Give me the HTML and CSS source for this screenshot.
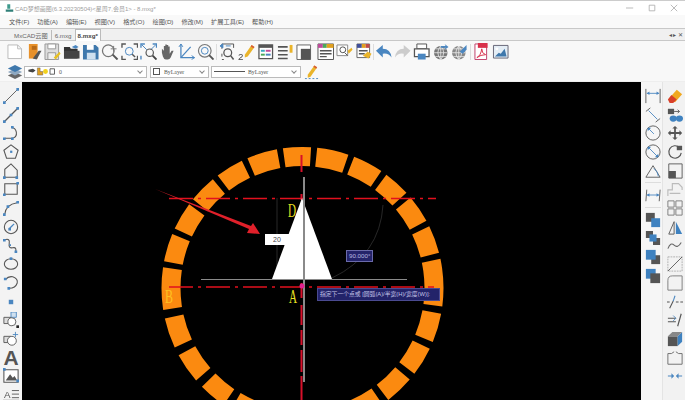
FILE: index.html
```html
<!DOCTYPE html>
<html lang="zh">
<head>
    <meta charset="UTF-8">
    <title>CAD梦想画图</title>
    <link rel="stylesheet" href="styles.css">
</head>
<body>

<div class="title-bar">
    <svg class="app-icon" viewBox="0 0 12 12"><path d="M3 1h4v6H3z" fill="#3f9a8c"/><path d="M1 8h10v3H1z" fill="#2f7f78"/></svg>
    <span class="title-text">CAD梦想画图(6.3.20230504)&lt;星周7,会员1&gt; - 8.mxg*</span>
    <div class="win-btns">
        <svg viewBox="0 0 10 10"><path d="M0 5h9" stroke="#aaa"/></svg>
        <svg viewBox="0 0 10 10"><path d="M1.5 1.5h7v7h-7z" fill="none" stroke="#aaa"/></svg>
        <svg viewBox="0 0 10 10"><path d="M1 1l8 8M9 1l-8 8" stroke="#aaa"/></svg>
    </div>
</div>

<div class="menu-bar">
    <span>文件(F)</span><span>功能(A)</span><span>编辑(E)</span><span>视图(V)</span><span>格式(O)</span><span>绘图(D)</span><span>修改(M)</span><span>扩展工具(E)</span><span>帮助(H)</span>
</div>

<div class="tab-bar">
    <div class="tab">MxCAD云图</div>
    <div class="tab">6.mxg</div>
    <div class="tab active">8.mxg*</div>
    <div class="tab-arrows">◂ ▸ ✕</div>
</div>

<div class="tool-row">
    <!-- new / file / save / open / save as -->
    <svg class="ico" viewBox="0 0 18 18"><path d="M2 2h10l4 4v10H2z" fill="#fff" stroke="#bbb"/><path d="M12 2v4h4" fill="none" stroke="#bbb"/></svg>
    <svg class="ico" viewBox="0 0 18 18"><path d="M4 1h9v15H4z" fill="#e8912a"/><path d="M8 16l6-8h3l-5 9z" fill="#555"/><path d="M7 3h5v4H7z" fill="#b86a18"/></svg>
    <svg class="ico" viewBox="0 0 18 18"><path d="M1 1h14v16H1z" fill="#ddd" stroke="#999"/><path d="M4 1h8v5H4z" fill="#fff" stroke="#999"/><path d="M4 10h8v7H4z" fill="#eee" stroke="#999"/><path d="M10 15l6-6 1 2-5 6z" fill="#e8c020"/></svg>
    <svg class="ico" viewBox="0 0 18 18"><path d="M1 4h6l1 2h7v10H1z" fill="#333"/><path d="M1 8h16v8H1z" fill="#444"/><path d="M9 4l4-2 3 2-3 2z" fill="#4a86c0"/></svg>
    <svg class="ico" viewBox="0 0 18 18"><path d="M1 2h13l3 3v12H1z" fill="#3f78ac"/><path d="M5 2h7v5H5z" fill="#fff"/><path d="M5 10h9v7H5z" fill="#cfe0ef"/></svg>
    <!-- zoom tools -->
    <svg class="ico" viewBox="0 0 18 18"><circle cx="7.5" cy="8" r="6" fill="none" stroke="#777" stroke-width="1.3"/><path d="M12 12l5 5" stroke="#555" stroke-width="2"/><path d="M13 3v6M10 6h6" stroke="#777"/></svg>
    <svg class="ico" viewBox="0 0 18 18"><path d="M1 5V1h4M13 1h4v4M1 13v4h4M17 13v4h-4" fill="none" stroke="#555" stroke-width="1.4"/><circle cx="8.5" cy="8.5" r="4" fill="none" stroke="#4a86c0"/><path d="M11.5 11.5l3 3" stroke="#555" stroke-width="1.5"/></svg>
    <svg class="ico" viewBox="0 0 18 18"><path d="M1 5V1h4M13 1h4v4M1 17v-4" fill="none" stroke="#4a86c0" stroke-width="1.4"/><path d="M2 2l5 5M16 2l-5 5" stroke="#4a86c0"/><circle cx="10" cy="10" r="3.8" fill="none" stroke="#555" stroke-width="1.2"/><path d="M13 13l4 4" stroke="#444" stroke-width="2"/></svg>
    <svg class="ico" viewBox="0 0 18 18"><path d="M3 10V6l2 2V3h1.5v4V1.5H8V7V2h1.5v5V3.5H11V11l2-3h2l-3 7q-1 2-3 2H7q-2 0-3-3z" fill="#666"/></svg>
    <svg class="ico" viewBox="0 0 18 18"><path d="M3 1v14h14" fill="none" stroke="#4a86c0" stroke-width="1.3"/><path d="M3 15L13 4" stroke="#4a86c0" stroke-width="1.3"/><path d="M1 4l2-3 2 3M14 13l3 2-3 2" fill="none" stroke="#4a86c0"/></svg>
    <svg class="ico" viewBox="0 0 18 18"><circle cx="8" cy="8" r="6.5" fill="none" stroke="#777" stroke-width="1.2"/><circle cx="8" cy="8" r="3.5" fill="none" stroke="#4a86c0"/><path d="M12.5 12.5l4.5 4.5" stroke="#555" stroke-width="2"/></svg>
    <i class="sep"></i>
    <svg class="ico" viewBox="0 0 18 18"><path d="M3 6V1h12v4M3 17h2M3 11v3" fill="none" stroke="#555"/><path d="M1 3l3-2v4zM7 3h5" fill="#4a86c0" stroke="#4a86c0"/><circle cx="9" cy="10" r="4" fill="none" stroke="#555" stroke-width="1.3"/><path d="M12 13l3 4" stroke="#555" stroke-width="1.6"/></svg>
    <svg class="ico" viewBox="0 0 18 18"><path d="M7 12L14 2l3 2-7 10-3 1z" fill="#eab42a"/><path d="M14 2l3 2-1 1.5-3-2z" fill="#d85a3a"/><text class="ico-num" x="0" y="17">2</text></svg>
    <svg class="ico" viewBox="0 0 18 18"><path d="M2 2h14v14H2z" fill="#fff" stroke="#555" stroke-width="1.3"/><path d="M2 2h14v3H2z" fill="#555"/><path d="M4 7h4v2H4z" fill="#3aa8c0"/><path d="M9 7h5v2H9z" fill="#c04a9a"/><path d="M4 11h4v2H4z" fill="#4aa85a"/><path d="M9 11h5v2H9z" fill="#4a86c0"/></svg>
    <svg class="ico" viewBox="0 0 18 18"><path d="M2 4h10M2 8h10M2 12h10M2 16h10" stroke="#555" stroke-width="1.6"/><path d="M14 2h3v8h-3z" fill="#eab42a"/></svg>
    <svg class="ico" viewBox="0 0 18 18"><path d="M2 2h14v15H2z" fill="#fff" stroke="#666"/><path d="M6 6h10v11H6z" fill="#555"/></svg>
    <i class="gap"></i>
    <svg class="ico" viewBox="0 0 18 18"><path d="M1 1h16v16H1z" fill="#fff" stroke="#555"/><path d="M1 1h5v4H1z" fill="#c04a9a"/><path d="M6 1h4v4H6z" fill="#4aa85a"/><path d="M10 1h7v4h-7z" fill="#e0a020"/><path d="M3 8h12M3 11h12M3 14h7" stroke="#555" stroke-width="1.5"/></svg>
    <svg class="ico" viewBox="0 0 18 18"><path d="M1 2h11v11H1z" fill="#fff" stroke="#888"/><circle cx="7" cy="7" r="3" fill="none" stroke="#555"/><path d="M9 10l3 3" stroke="#555"/><path d="M12 8l4-3 1 2-4 4z" fill="#eab42a"/></svg>
    <svg class="ico" viewBox="0 0 18 18"><path d="M2 1h13v14H2z" fill="#fff" stroke="#666"/><path d="M2 1h5v4H2z" fill="#3f4f9a"/><path d="M7 1h4v4H7z" fill="#e0a020"/><path d="M11 1h4v4h-4z" fill="#c04a4a"/><path d="M4 8h9M4 11h6" stroke="#555" stroke-width="1.4"/><path d="M8 13l5-4 4 2-3 5z" fill="#eab42a"/></svg>
    <i class="sep tight"></i>
    <svg class="ico" viewBox="0 0 18 18"><path d="M1 8l7-6v4q8 0 9 9-3-5-9-4v4z" fill="#4a86c0"/></svg>
    <svg class="ico" viewBox="0 0 18 18"><path d="M17 8l-7-6v4q-8 0-9 9 3-5 9-4v4z" fill="#ccc"/></svg>
    <svg class="ico" viewBox="0 0 18 18"><path d="M4 1h10v5H4z" fill="#fff" stroke="#555"/><path d="M1.5 6h15v8h-15z" fill="#fff" stroke="#555" stroke-width="1.3"/><path d="M5 11h8v6H5z" fill="#4a86c0"/></svg>
    <svg class="ico" viewBox="0 0 18 18"><circle cx="9" cy="10" r="7" fill="#777"/><path d="M2 10h14M9 3v14M3.5 6h11M3.5 14h11M9 3q-6 7 0 14M9 3q6 7 0 14" fill="none" stroke="#eee" stroke-width=".8"/><path d="M9 3h5l-1-2 4 3-4 3 1-2H9z" fill="#4a86c0"/></svg>
    <svg class="ico" viewBox="0 0 18 18"><circle cx="8" cy="10" r="7" fill="#888"/><path d="M1 10h14M8 3v14M2.5 6h11M2.5 14h11M8 3q-6 7 0 14M8 3q6 7 0 14" fill="none" stroke="#eee" stroke-width=".8"/><path d="M9 9l7-7v5l-4 4z" fill="#4a86c0"/></svg>
    <i class="sep"></i>
    <svg class="ico" viewBox="0 0 18 18"><path d="M2 1h12v16H2z" fill="#fff" stroke="#c0406a"/><path d="M5 0h10v5H5z" fill="#d8304a"/><path d="M4 15q4-2 5-9 0 5 4 6-5 0-9 3z" fill="none" stroke="#d8304a"/></svg>
    <svg class="ico" viewBox="0 0 18 18"><path d="M1.500 2.500h15v13h-15z" fill="#e4edf5" stroke="#667"/><path d="M3 14l4-4 2 1 4-5 2 8z" fill="#3f78ac"/><circle cx="5" cy="6" r="1.500" fill="#fff"/></svg>
</div>

<div class="prop-row">
    <svg class="layer-ico" viewBox="0 0 18 18"><path d="M9 9l8 4-8 4-8-4z" fill="#666"/><path d="M9 5l8 4-8 4-8-4z" fill="#8fa8c0"/><path d="M9 1l8 4-8 4-8-4z" fill="#3f78ac"/></svg>
    <div class="combo combo-layer">
        <svg class="state-ico" viewBox="0 0 30 10"><path d="M1 3l5-1 3 2-3 2-5-1z" fill="#444"/><path d="M11 1h3v4h3v4h-6z" fill="#e0a020" stroke="#555" stroke-width=".5"/><circle cx="20" cy="5" r="2.700" fill="#f2d21e"/><path d="M25 2h5v6h-5z" fill="#fff" stroke="#555"/></svg>
        <span>0</span>
    </div>
    <div class="combo combo-color">
        <i class="swatch"></i>
        <span>ByLayer</span>
    </div>
    <div class="combo combo-line">
        <i class="line-sample"></i>
        <span>ByLayer</span>
    </div>
    <svg class="pen-ico" viewBox="0 0 16 16"><path d="M4 11L11 1l3 2-7 10-3 1z" fill="#eab42a"/><path d="M11 1l3 2-1 1.500-3-2z" fill="#d85a3a"/><path d="M1 15h2M5 15h2M9 15h2M13 15h2" stroke="#4a86c0"/></svg>
</div>

<div class="main">
    <div class="left-bar">
        <svg class="ico" viewBox="0 0 18 18"><path d="M2 16L16 2" stroke="#555"/><path d="M0 15h3v3H0zM15 0h3v3h-3z" fill="#4a86c0"/></svg>
        <svg class="ico" viewBox="0 0 18 18"><path d="M2 16L16 2" stroke="#555" stroke-width="1.400"/><path d="M0 15h3v3H0zM7.500 7.500h3v3h-3zM15 0h3v3h-3z" fill="#4a86c0"/></svg>
        <svg class="ico" viewBox="0 0 18 18"><path d="M2 15h8q6-1 5-7-1-5-5-5" fill="none" stroke="#555" stroke-width="1.200"/><path d="M0 14h3v3H0zM9 14h3v3H9zM9 1h3v3H9z" fill="#4a86c0"/></svg>
        <svg class="ico" viewBox="0 0 18 18"><path d="M9 1l8 6-3 9H4L1 7z" fill="none" stroke="#555" stroke-width="1.200"/><path d="M8 7.500h2.500V10H8z" fill="#4a86c0"/></svg>
        <svg class="ico" viewBox="0 0 18 18"><path d="M2 16V7l7-6 7 7v8z" fill="none" stroke="#555" stroke-width="1.200"/><path d="M0 15h3v3H0zM14 15h3v3h-3z" fill="#4a86c0"/></svg>
        <svg class="ico" viewBox="0 0 18 18"><path d="M2 3h14v12H2z" fill="none" stroke="#555" stroke-width="1.200"/><path d="M0 14h3v3H0zM15 1h3v3h-3z" fill="#4a86c0"/></svg>
        <svg class="ico" viewBox="0 0 18 18"><path d="M2 16Q3 5 16 3" fill="none" stroke="#555" stroke-width="1.200"/><path d="M0 15h3v3H0zM15 1h3v3h-3zM4 6h3v3H4z" fill="#4a86c0"/></svg>
        <svg class="ico" viewBox="0 0 18 18"><circle cx="9" cy="9" r="7.500" fill="none" stroke="#555" stroke-width="1.200"/><path d="M7.500 10.500l5-5" stroke="#4a86c0" stroke-width="1.500"/><path d="M6 10h3v3H6z" fill="#4a86c0"/></svg>
        <svg class="ico" viewBox="0 0 18 18"><path d="M2 2q6-2 5 4t4 5 3 5" fill="none" stroke="#555" stroke-width="1.200"/><path d="M0 1h3v3H0zM13 14h3v3h-3zM7 7h2v2H7z" fill="#4a86c0"/></svg>
        <svg class="ico" viewBox="0 0 18 18"><ellipse cx="9" cy="9" rx="7.500" ry="6" fill="none" stroke="#555" stroke-width="1.200"/><path d="M7.500 1.500h3v3h-3z" fill="#4a86c0"/></svg>
        <svg class="ico" viewBox="0 0 18 18"><path d="M3 5q3-4 8-3 6 2 5 7-2 6-9 6" fill="none" stroke="#555" stroke-width="1.200"/><path d="M1 3h3v3H1zM5 13.500h3v3H5z" fill="#4a86c0"/></svg>
        <svg class="ico" viewBox="0 0 18 18"><path d="M6.500 6.500h5v5h-5z" fill="#4a86c0"/></svg>
        <svg class="ico" viewBox="0 0 18 18"><path d="M1 6h8v7H1z" fill="#ddd" stroke="#555"/><path d="M9 0h6v6H9z" fill="#cfe0ef" stroke="#4a86c0"/><circle cx="10" cy="11" r="4.500" fill="#fff" stroke="#555"/><path d="M15 15h3v3h-3z" fill="#222"/></svg>
        <svg class="ico" viewBox="0 0 18 18"><path d="M1 6h8v7H1z" fill="#ddd" stroke="#555"/><circle cx="10" cy="11" r="5" fill="#fff" stroke="#555"/><path d="M14 1v6M11 4h6" stroke="#4a86c0"/></svg>
        <span class="left-text">A</span>
        <svg class="ico" viewBox="0 0 18 18"><path d="M1 2h16v14H1z" fill="#fff" stroke="#555" stroke-width="1.200"/><path d="M3 14l5-7 3 4 2-2 3 5z" fill="#555"/><path d="M0 0h3v3H0zM15 13h3v3h-3z" fill="#4a86c0"/></svg>
        <svg class="ico" viewBox="0 0 18 18"><text class="mtext" x="1" y="12">A</text><path d="M10 4h8M10 8h8M10 12h8M0 15h18" stroke="#555"/></svg>
    </div>

    <div class="canvas">
        <svg class="drawing" viewBox="22 82 619 318">
            <circle class="ring" cx="302.500" cy="288" r="131.500" pathLength="360" transform="rotate(262 302.500 288)"
                stroke-dasharray="11.500 2.500 13 2.500 12.500 2.500 11 2.500 11.500 2.500 11.500 2.500 19.500 3 12 3 12 3 12 3 12 3 12 2.500 11.500 2.500 7.500 2.500 11.500 3.500 11.500 3.500 12.500 3.500 12.500 3.500 17.500 2.500 11.500 2.500 11.500 2.500 11.500 2.500 11.500 2.500 12.500 2.500"/>
            <path class="thin" d="M277 198v81M383 205q-3 50-51 73"/>
            <path class="red" d="M169 198.500H436M169 287H434"/>
            <path class="red-v" d="M301.500 155V172M301.500 194V200M301.500 283V298M301.500 305V325M301.500 330V345M301.500 350V372M301.500 376V400"/>
            <path d="M302 198L272 279H332z" fill="#fff"/>
            <path class="grey" d="M201 279.500H407"/>
            <path class="grey grey-v" d="M304 177V382"/>
            <path d="M155 189L251 226 253 223 260 234 247 233 249 229z" fill="#e0202a"/>
            <circle cx="302" cy="286" r="2.500" fill="#e02090"/>
            <text class="letter letter-y" x="288" y="217" textLength="8" lengthAdjust="spacingAndGlyphs">D</text>
            <text class="letter letter-o" x="165" y="303" textLength="8" lengthAdjust="spacingAndGlyphs">B</text>
            <text class="letter letter-y" x="289" y="303" textLength="8" lengthAdjust="spacingAndGlyphs">A</text>
        </svg>
        <div class="dim-box">20</div>
        <div class="angle-box">90.000°</div>
        <div class="prompt-box">指定下一个点或 [圆弧(A)/半宽(H)/宽度(W)]:</div>
    </div>

    <div class="right-bar">
        <div class="right-col">
            <svg class="ico" viewBox="0 0 18 18"><path d="M1 1v16M17 1v16" stroke="#555"/><path d="M2 6h14" stroke="#4a86c0"/><path d="M2 6l3-2v4zM16 6l-3-2v4z" fill="#4a86c0"/></svg>
            <svg class="ico" viewBox="0 0 18 18"><path d="M1 5l5-4M12 17l5-4" stroke="#555"/><path d="M4 4l10 10" stroke="#4a86c0"/></svg>
            <svg class="ico" viewBox="0 0 18 18"><circle cx="9" cy="9" r="8" fill="none" stroke="#555"/><path d="M4 4l6 6" stroke="#4a86c0"/><path d="M3 3h4L3 7z" fill="#4a86c0"/></svg>
            <svg class="ico" viewBox="0 0 18 18"><circle cx="9" cy="9" r="8" fill="none" stroke="#555"/><path d="M4 4l10 10" stroke="#4a86c0"/><path d="M3 3h4L3 7zM15 15h-4l4-4z" fill="#4a86c0"/></svg>
            <svg class="ico" viewBox="0 0 18 18"><path d="M1 16h16L9 3z" fill="none" stroke="#555"/><path d="M10 6q5 4 5 9" fill="none" stroke="#4a86c0"/></svg>
            <i class="hsep"></i>
            <svg class="ico" viewBox="0 0 18 18"><path d="M2 3l-1 13M17 3l-1 13" stroke="#555"/><path d="M2 9h14" stroke="#4a86c0"/><path d="M2 9l3-2v4zM16 9l-3-2v4z" fill="#4a86c0"/></svg>
            <i class="hsep"></i>
            <svg class="ico" viewBox="0 0 18 18"><path d="M1 1h10v10H1z" fill="#555"/><path d="M7 7h10v10H7z" fill="#3f82c0"/></svg>
            <svg class="ico" viewBox="0 0 18 18"><path d="M1 1h8v8H1zM9 9h8v8H9z" fill="#555"/><path d="M5 5h8v8H5z" fill="#3f82c0"/></svg>
            <svg class="ico" viewBox="0 0 18 18"><path d="M7 7h10v10H7z" fill="#555"/><path d="M1 1h11v11H1z" fill="#3f82c0"/></svg>
            <svg class="ico" viewBox="0 0 18 18"><path d="M1 1h11v11H1z" fill="#3f82c0"/><path d="M6 6h11v11H6z" fill="#555"/></svg>
        </div>
        <div class="right-col right-col2">
            <svg class="ico" viewBox="0 0 18 18"><path d="M2 12L11 2l6 5-8 9z" fill="#f0a820"/><path d="M1 13l4-5 6 5-4 4H3z" fill="#d8402a"/></svg>
            <svg class="ico" viewBox="0 0 18 18"><path d="M1 2h7v6H1z" fill="#555"/><path d="M8 5h6l-2-2M14 5l-2 2" fill="none" stroke="#555"/><ellipse cx="7" cy="13" rx="4" ry="3.500" fill="#3f82c0"/><ellipse cx="14" cy="13" rx="4" ry="3.500" fill="#3f82c0"/></svg>
            <svg class="ico" viewBox="0 0 18 18"><path d="M9 1l3 3h-2v4h4V6l3 3-3 3v-2h-4v4h2l-3 3-3-3h2v-4H4v2L1 9l3-3v2h4V4H6z" fill="#555"/></svg>
            <svg class="ico" viewBox="0 0 18 18"><path d="M14 4A7 7 0 1 0 16 10" fill="none" stroke="#555" stroke-width="1.300"/><path d="M11 2h6v5h-6z" fill="#555"/></svg>
            <svg class="ico" viewBox="0 0 18 18"><path d="M2 1h15v16H2z" fill="none" stroke="#555"/><path d="M2 9h8v8H2z" fill="#555"/></svg>
            <svg class="ico" viewBox="0 0 18 18"><path d="M1 17v-7h5V3h7l4 4v3M3 14h12" fill="none" stroke="#bbb" stroke-width="1.300"/></svg>
            <svg class="ico" viewBox="0 0 18 18"><path d="M1 1h7v7H1zM10 1h7v7h-7zM1 10h7v7H1zM10 10h7v7h-7z" fill="none" stroke="#777"/></svg>
            <svg class="ico" viewBox="0 0 18 18"><path d="M8 3v14H2z" fill="none" stroke="#555"/><path d="M10 3v14h7z" fill="#3f82c0"/></svg>
            <svg class="ico" viewBox="0 0 18 18"><path d="M1 12q3-8 7-4t8-3" fill="none" stroke="#666" stroke-width="1.200"/></svg>
            <svg class="ico" viewBox="0 0 18 18"><path d="M1 1h16v16H1z" fill="none" stroke="#aaa" stroke-dasharray="2 1"/><path d="M1 17L17 1" stroke="#555"/></svg>
            <svg class="ico" viewBox="0 0 18 18"><path d="M1 17V6q0-5 5-5h11v16z" fill="none" stroke="#777"/></svg>
            <svg class="ico" viewBox="0 0 18 18"><path d="M3 16L7 8M10 9h3M15 9h3M0 9h3" stroke="#555" stroke-width="1.200"/><path d="M7 8l2-6" stroke="#4a86c0" stroke-width="1.200"/></svg>
            <svg class="ico" viewBox="0 0 18 18"><path d="M1 7h9M1 11h9" stroke="#555" stroke-width="1.300"/><path d="M12 16l4-14" stroke="#555" stroke-width="1.300"/><path d="M7 4l3 3-3 3" fill="none" stroke="#4a86c0"/></svg>
            <svg class="ico" viewBox="0 0 18 18"><path d="M1 6h11v11H1z" fill="#555"/><path d="M12 6l5-5v11l-5 5z" fill="#3f82c0"/><path d="M1 6l5-5h11l-5 5z" fill="#888"/></svg>
            <svg class="ico" viewBox="0 0 18 18"><path d="M5 4H1v12h16V4h-4M5 4l3-2M13 4l-3-2" fill="none" stroke="#666"/></svg>
            <svg class="ico" viewBox="0 0 18 18"><path d="M1 9h6M11 9h6" stroke="#4a86c0" stroke-width="1.200"/><path d="M8 9L5 6v6zM10 9l3-3v6z" fill="#4a86c0"/></svg>
        </div>
    </div>
</div>

</body>
</html>
```

FILE: styles.css
```css
html, body {
    margin: 0;
    height: 400px;
    overflow: hidden;
}
body {
    font-family: "Liberation Sans", "Noto Sans CJK SC", sans-serif;
    background-color: #f7f7f7;
    display: flex;
    flex-direction: column;
}
i {
    display: block;
    flex: none;
}
svg {
    display: block;
    flex: none;
}

/* title bar */
.title-bar {
    height: 14px;
    border-top: 1px solid #ccc;
    background-color: #fff;
    display: flex;
    align-items: center;
    padding-left: 5px;
}
.app-icon {
    width: 9px;
    height: 10px;
    margin-right: 1px;
}
.title-text {
    font-size: 6px;
    color: #a0a0a0;
}
.win-btns {
    margin-left: auto;
    display: flex;
    gap: 14px;
    padding-right: 7px;
}
.win-btns svg {
    width: 8px;
    height: 8px;
}

/* menu */
.menu-bar {
    height: 13px;
    display: flex;
    align-items: center;
    gap: 8px;
    padding-left: 9px;
    font-size: 6.2px;
    color: #555;
    background-color: #f9f9f9;
}

/* tabs */
.tab-bar {
    height: 11px;
    display: flex;
    align-items: flex-end;
    padding-left: 6px;
    border-top: 1px solid #c8c8c8;
    border-bottom: 1px solid #c8c8c8;
    background-color: #f0f0f0;
    font-size: 6.2px;
    color: #666;
}
.tab {
    height: 10px;
    line-height: 11px;
    padding: 0 2px 0 8px;
}
.tab + .tab {
    padding-left: 3px;
    border-left: 1px solid #bbb;
    margin-left: 1px;
}
.tab.active {
    background-color: #fff;
    border: 1px solid #bbb;
    border-bottom: none;
    height: 11px;
    font-weight: bold;
    color: #444;
    margin-bottom: -1px;
    padding: 0 2px;
}
.tab-arrows {
    margin-left: auto;
    padding-right: 2px;
    font-size: 6px;
    line-height: 10px;
    color: #555;
}

/* toolbars */
.tool-row {
    height: 21px;
    display: flex;
    align-items: center;
    gap: 1.600px;
    padding-left: 6px;
    background-color: #f8f8f8;
}
.ico {
    width: 16px;
    height: 16px;
    filter: blur(0.3px);
}
.tool-row .ico {
    width: 17.500px;
    height: 17.500px;
}
.sep {
    width: 1px;
    height: 16px;
    background-color: #ddd;
}
.sep.tight {
    margin: 0 -1px;
}
.gap {
    width: 1px;
}
.ico-num {
    font: 10px "Liberation Sans", sans-serif;
    fill: #444;
}
.prop-row {
    height: 19px;
    display: flex;
    align-items: center;
    padding-left: 7px;
    background-color: #f8f8f8;
}
.layer-ico {
    width: 16px;
    height: 16px;
    margin-right: 1px;
}
.combo {
    height: 10px;
    border: 1px solid #bbb;
    background-color: #fff;
    display: flex;
    align-items: center;
    font-family: "Liberation Serif", serif;
    font-size: 5.8px;
    color: #555;
    position: relative;
}
.combo::after {
    content: "";
    position: absolute;
    right: 4px;
    top: 2px;
    width: 3px;
    height: 3px;
    border-right: 1px solid #888;
    border-bottom: 1px solid #888;
    transform: rotate(45deg);
}
.combo-layer {
    width: 121px;
    margin-right: 3px;
}
.state-ico {
    width: 30px;
    height: 9px;
    margin: 0 3px 0 1px;
}
.combo-color {
    width: 57px;
    margin-right: 2px;
}
.swatch {
    width: 5px;
    height: 5px;
    border: 1px solid #555;
    margin: 0 4px 0 2px;
}
.combo-line {
    width: 88px;
    margin-right: 3px;
}
.line-sample {
    width: 31px;
    height: 1px;
    background-color: #555;
    margin: 0 3px 0 2px;
}
.pen-ico {
    width: 15px;
    height: 16px;
}

/* main area */
.main {
    flex: 1;
    display: flex;
    min-height: 0;
    border-top: 1px solid #eee;
}
.left-bar {
    width: 22px;
    flex: none;
    display: flex;
    flex-direction: column;
    align-items: center;
    gap: 2.700px;
    padding-top: 6px;
    background-color: #f3f3f3;
}
.left-text {
    font-family: "Liberation Sans", sans-serif;
    font-size: 21px;
    font-weight: bold;
    line-height: 16px;
    color: #555;
}
.mtext {
    font: 11px "Liberation Sans", sans-serif;
    fill: #555;
}
.canvas {
    flex: 1;
    position: relative;
    background-color: #000;
}
.drawing {
    width: 619px;
    height: 318px;
}
.ring {
    fill: none;
    stroke: #fb8a10;
    stroke-width: 19;
}
.thin {
    fill: none;
    stroke: #3a3a3a;
    stroke-width: 0.7;
}
.grey {
    stroke: #8a8a8a;
    stroke-width: 1.200;
}
.grey-v {
    stroke-width: 2;
}
.red {
    fill: none;
    stroke: #e2101e;
    stroke-width: 1.600;
    stroke-dasharray: 24 5 3 5;
}
.red-v {
    fill: none;
    stroke: #d8102a;
    stroke-width: 2;
}
.letter {
    font-family: "Liberation Serif", serif;
    font-size: 18px;
}
.letter-y {
    fill: #e8e020;
}
.letter-o {
    fill: #ffc020;
}
.dim-box {
    position: absolute;
    left: 243px;
    top: 152px;
    width: 24px;
    height: 11px;
    background-color: #fff;
    font-size: 7px;
    line-height: 11px;
    text-align: center;
    color: #444;
}
.angle-box {
    position: absolute;
    left: 324px;
    top: 168px;
    padding: 0 2px;
    height: 10px;
    line-height: 10px;
    background-color: #23236a;
    border: 1px solid #6a6aaa;
    font-size: 6.2px;
    color: #b8b8e0;
}
.prompt-box {
    position: absolute;
    left: 295px;
    top: 206px;
    width: 119px;
    height: 11px;
    line-height: 11px;
    padding-left: 2px;
    background-color: #23236a;
    border: 1px solid #4a4a90;
    font-size: 5.800px;
    color: #c4c4e8;
    white-space: nowrap;
}
.right-bar {
    width: 44px;
    flex: none;
    display: flex;
    background-color: #f6f6f6;
}
.right-col {
    width: 21px;
    display: flex;
    flex-direction: column;
    align-items: center;
    gap: 2.700px;
    padding: 6px 0 0 2px;
    box-sizing: border-box;
}
.right-col2 {
    width: 23px;
    border-left: 1px solid #e4e4e4;
    background-color: #f2f2f2;
}
.hsep {
    width: 16px;
    height: 1px;
    background-color: #ddd;
    margin: 1px 0;
}
```
